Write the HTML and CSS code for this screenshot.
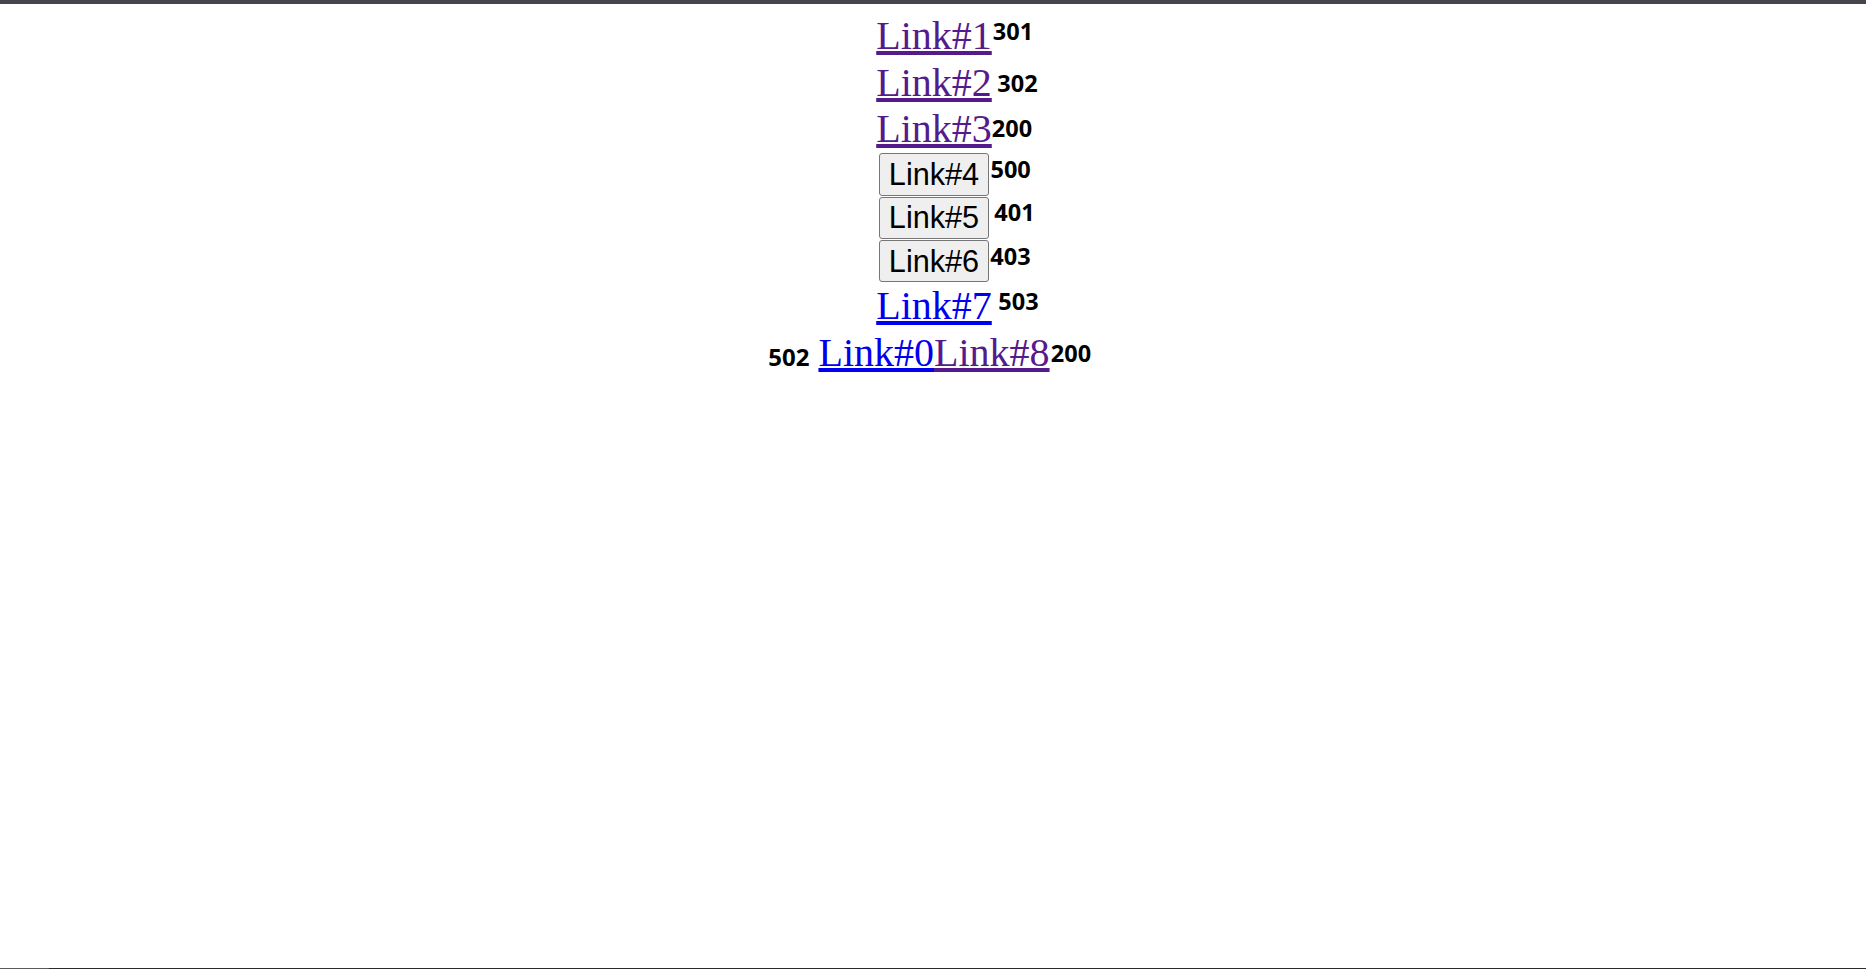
FILE: index.html
```html
<!DOCTYPE html>
<html>
<head>
<meta charset="utf-8">
<title>Links</title>
<link rel="stylesheet" href="styles.css">
</head>
<body>
<div class="topbar"></div>
<main class="list">
  <div class="row"><span class="item"><a class="lnk visited" href="#1">Link#1</a><b class="code n1">301</b></span></div>
  <div class="row"><span class="item"><a class="lnk visited" href="#2">Link#2</a><b class="code n2">302</b></span></div>
  <div class="row"><span class="item"><a class="lnk visited" href="#3">Link#3</a><b class="code n3">200</b></span></div>
  <div class="row btnrow"><span class="item"><button class="btn">Link#4</button><b class="code n4">500</b></span></div>
  <div class="row btnrow"><span class="item"><button class="btn">Link#5</button><b class="code n5">401</b></span></div>
  <div class="row btnrow"><span class="item"><button class="btn">Link#6</button><b class="code n6">403</b></span></div>
  <div class="row"><span class="item"><a class="lnk" href="#7">Link#7</a><b class="code n7">503</b></span></div>
  <div class="row"><span class="item"><b class="code n0">502</b><a class="lnk" href="#0">Link#0</a><a class="lnk visited" href="#8">Link#8</a><b class="code n8">200</b></span></div>
</main>
<div class="bottombar"><span class="bottomleft"></span></div>
</body>
</html>
```
FILE: styles.css
```css
html, body {
  margin: 0;
  padding: 0;
  background: #ffffff;
  height: 100%;
  overflow: hidden;
}
body {
  position: relative;
}
.topbar {
  height: 4px;
  background: #45454c;
}
.list {
  padding: 9px 8px 0 10px;
  text-align: center;
  font-family: "Liberation Serif", "Times New Roman", serif;
  font-size: 40px;
}
.row {
  height: 46.67px;
  line-height: 46.67px;
}
.btnrow {
  height: 43.33px;
  line-height: normal;
  display: flex;
  justify-content: center;
  align-items: flex-start;
}
.item {
  position: relative;
  display: inline-block;
}
.lnk {
  color: #0000ee;
  text-decoration: underline;
  text-decoration-thickness: 4px;
  text-underline-offset: 2px;
}
.lnk.visited {
  color: #551a8b;
}
.btn {
  display: block;
  margin: 0.3px 0 0 0;
  font-family: "Liberation Sans", Arial, sans-serif;
  font-size: 30.67px;
  line-height: normal;
  color: #000000;
  background: #efefef;
  border: 1px solid #767676;
  border-radius: 3px;
  padding: 2.7px 8.6px;
}
.code {
  position: absolute;
  font-family: "Open Sans", "Noto Sans", sans-serif;
  font-weight: 700;
  font-size: 23.5px;
  line-height: 23.5px;
  color: #000000;
  white-space: nowrap;
}
.n1 { left: calc(100% + 1px); top: 7px; }
.n2 { left: calc(100% + 5.6px); top: 12px; }
.n3 { left: 100%; top: 10.4px; }
.n4 { left: calc(100% + 1.7px); top: 5.2px; }
.n5 { left: calc(100% + 5.5px); top: 5.1px; }
.n6 { left: calc(100% + 1.5px); top: 5px; }
.n7 { left: calc(100% + 6.6px); top: 7.3px; }
.n8 { left: calc(100% + 1.3px); top: 12.6px; }
.n0 {
  right: calc(100% + 9px);
  top: 15.2px;
  font-size: 24px;
  line-height: 24px;
}
.bottombar {
  position: absolute;
  left: 0;
  right: 0;
  bottom: 0;
  height: 1px;
  background: #2b2a26;
}
.bottomleft {
  display: block;
  width: 49px;
  height: 1px;
  background: #5a5a58;
}
```
